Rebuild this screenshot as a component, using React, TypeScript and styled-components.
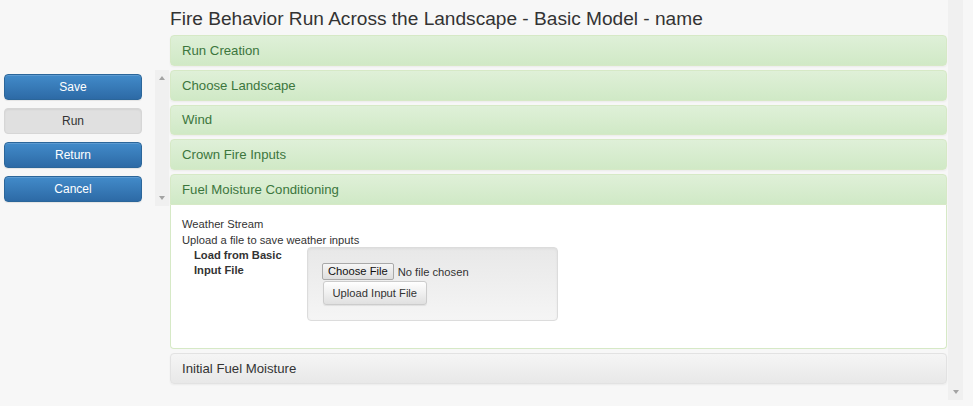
import React from "react";
import styled, { createGlobalStyle } from "styled-components";

const Global = createGlobalStyle`
  html, body { margin: 0; padding: 0; }
  body {
    background: #f7f7f7;
    font-family: "Liberation Sans", Arial, Helvetica, sans-serif;
    color: #333;
    width: 973px;
    height: 406px;
    overflow: hidden;
  }
`;

const Page = styled.div`
  display: flex;
  align-items: flex-start;
  height: 406px;
`;

const Sidebar = styled.div`
  width: 151px;
  padding: 74px 0 0 4px;
  display: flex;
  flex-direction: column;
  gap: 8px;
  flex-shrink: 0;
`;

const SideButton = styled.button<{ $variant?: "primary" | "muted" }>`
  width: 138px;
  height: 26px;
  border-radius: 4px;
  font-family: "Liberation Sans", Arial, sans-serif;
  font-size: 12px;
  padding: 0;
  cursor: pointer;
  ${(p) =>
    p.$variant === "muted"
      ? `
    background: #e0e0e0;
    border: 1px solid #d6d6d6;
    color: #333;
    box-shadow: inset 0 1px 2px rgba(0,0,0,0.06);
  `
      : `
    background: linear-gradient(#428bca, #2d6aa6);
    border: 1px solid #2b669a;
    color: #fff;
    box-shadow: inset 0 1px 0 rgba(255,255,255,0.15), 0 1px 1px rgba(0,0,0,0.075);
  `}
`;

const ScrollTrack = styled.div<{ $top: number; $height: number; $width: number }>`
  flex-shrink: 0;
  width: ${(p) => p.$width}px;
  margin-top: ${(p) => p.$top}px;
  height: ${(p) => p.$height}px;
  background: #f0f0f0;
  display: flex;
  flex-direction: column;
  justify-content: space-between;
  align-items: center;
  box-sizing: border-box;
`;

const Arrow = styled.div<{ $dir: "up" | "down"; $visible?: boolean }>`
  width: 0;
  height: 0;
  border-left: 3.5px solid transparent;
  border-right: 3.5px solid transparent;
  ${(p) =>
    p.$dir === "up"
      ? `border-bottom: 4px solid ${p.$visible === false ? "transparent" : "#a3a3a3"}; margin-top: 6px;`
      : `border-top: 4px solid ${p.$visible === false ? "transparent" : "#a3a3a3"}; margin-bottom: 6px;`}
`;

const Main = styled.div`
  width: 777px;
  flex-shrink: 0;
  margin-left: 1px;
  margin-right: 1px;
`;

const Title = styled.h1`
  margin: 0;
  height: 35px;
  line-height: 37px;
  font-size: 19.1px;
  font-weight: normal;
  color: #333;
  white-space: nowrap;
`;

const PanelStack = styled.div`
  display: flex;
  flex-direction: column;
  gap: 4px;
`;

const PanelHeader = styled.div<{ $tone?: "success" | "default"; $open?: boolean }>`
  height: 30.75px;
  box-sizing: border-box;
  padding: 0 11px;
  display: flex;
  align-items: center;
  font-size: 13.2px;
  border-radius: ${(p) => (p.$open ? "4px 4px 0 0" : "4px")};
  ${(p) =>
    p.$tone === "default"
      ? `
    background: linear-gradient(#f5f5f5, #e8e8e8);
    border: 1px solid #e2e2e2;
    color: #333;
  `
      : `
    background: linear-gradient(#dff0d8, #d0e9c6);
    border: 1px solid #d6e9c6;
    color: #3c763d;
  `}
  box-shadow: 0 1px 2px rgba(0,0,0,0.05);
`;

const OpenPanel = styled.div`
  display: flex;
  flex-direction: column;
`;

const PanelBody = styled.div`
  background: #fff;
  border: 1px solid #d6e9c6;
  border-top: none;
  border-radius: 0 0 4px 4px;
  height: 144.25px;
  box-sizing: border-box;
  padding: 11px 11px;
  font-size: 11.2px;
  line-height: 16px;
  color: #333;
`;

const TextLine = styled.div``;

const FormRow = styled.div`
  display: flex;
  align-items: flex-start;
  padding-left: 12px;
  margin-top: -1px;
`;

const FieldLabel = styled.div`
  width: 113px;
  font-weight: bold;
  line-height: 15px;
  padding-top: 1px;
  color: #333;
`;

const Well = styled.div`
  width: 251px;
  height: 74px;
  box-sizing: border-box;
  padding: 15px 14px;
  background: linear-gradient(#e8e8e8, #f5f5f5);
  border: 1px solid #dcdcdc;
  border-radius: 4px;
  box-shadow: inset 0 1px 3px rgba(0,0,0,0.05), 0 1px 0 rgba(255,255,255,0.1);
  display: flex;
  flex-direction: column;
  align-items: flex-start;
  gap: 1px;
`;

const FileInput = styled.input`
  font-family: "Liberation Sans", Arial, sans-serif;
  font-size: 11.2px;
  color: #333;
  height: 17px;
  margin: 0;
  &::file-selector-button {
    font-family: "Liberation Sans", Arial, sans-serif;
    font-size: 11.2px;
    color: #111;
    height: 17px;
    padding: 0 5px;
    margin-right: 4px;
    background: linear-gradient(#f6f6f6, #dedede);
    border: 1px solid #a9a9a9;
    border-radius: 2px;
  }
`;

const DefaultButton = styled.button`
  font-family: "Liberation Sans", Arial, sans-serif;
  font-size: 11.2px;
  color: #333;
  height: 26px;
  padding: 0 8.5px;
  margin-left: 1px;
  background: linear-gradient(#fff, #e0e0e0);
  border: 1px solid #ccc;
  border-radius: 3px;
  box-shadow: inset 0 1px 0 rgba(255,255,255,0.15), 0 1px 1px rgba(0,0,0,0.075);
`;

export default function App() {
  return (
    <>
      <Global />
      <Page>
        <Sidebar>
          <SideButton>Save</SideButton>
          <SideButton $variant="muted">Run</SideButton>
          <SideButton>Return</SideButton>
          <SideButton>Cancel</SideButton>
        </Sidebar>
        <ScrollTrack $top={70} $height={136} $width={14}>
          <Arrow $dir="up" />
          <Arrow $dir="down" />
        </ScrollTrack>
        <Main>
          <Title>Fire Behavior Run Across the Landscape - Basic Model - name</Title>
          <PanelStack>
            <PanelHeader>Run Creation</PanelHeader>
            <PanelHeader>Choose Landscape</PanelHeader>
            <PanelHeader>Wind</PanelHeader>
            <PanelHeader>Crown Fire Inputs</PanelHeader>
            <OpenPanel>
              <PanelHeader $open>Fuel Moisture Conditioning</PanelHeader>
              <PanelBody>
                <TextLine>Weather Stream</TextLine>
                <TextLine>Upload a file to save weather inputs</TextLine>
                <FormRow>
                  <FieldLabel>
                    Load from Basic
                    <br />
                    Input File
                  </FieldLabel>
                  <Well>
                    <FileInput type="file" />
                    <DefaultButton>Upload Input File</DefaultButton>
                  </Well>
                </FormRow>
              </PanelBody>
            </OpenPanel>
            <PanelHeader $tone="default">Initial Fuel Moisture</PanelHeader>
          </PanelStack>
        </Main>
        <ScrollTrack $top={0} $height={400} $width={15}>
          <Arrow $dir="up" $visible={false} />
          <Arrow $dir="down" />
        </ScrollTrack>
      </Page>
    </>
  );
}
